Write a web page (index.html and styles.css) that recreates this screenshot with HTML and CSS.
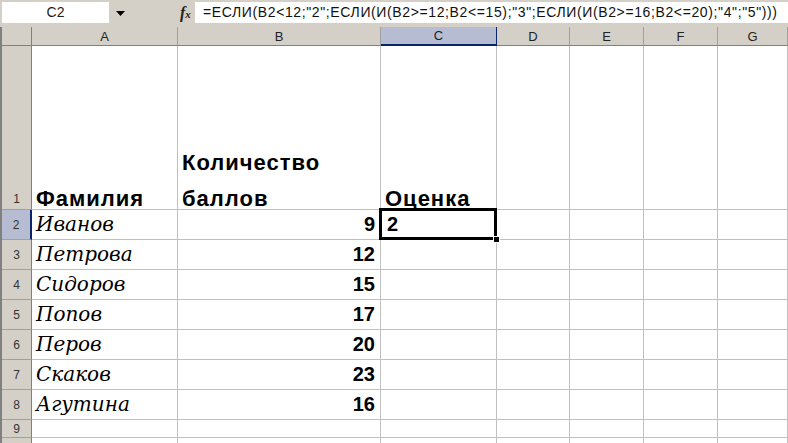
FILE: index.html
```html
<!DOCTYPE html>
<html lang="ru">
<head>
<meta charset="utf-8">
<link rel="stylesheet" href="styles.css">
</head>
<body>
<div class="app">
  <div class="fbar">
    <div class="namebox">C2</div>
    <div class="dd"><svg width="9" height="5" viewBox="0 0 9 5"><path d="M0 0H9L4.5 5Z" fill="#000"/></svg></div>
    <div class="fx">f<span>x</span></div>
    <div class="formula">=ЕСЛИ(B2&lt;12;"2";ЕСЛИ(И(B2&gt;=12;B2&lt;=15);"3";ЕСЛИ(И(B2&gt;=16;B2&lt;=20);"4";"5")))</div>
  </div>
  <div class="sheet">
    <div class="hd corner"></div>
    <div class="hd col">A</div>
    <div class="hd col">B</div>
    <div class="hd col sel">C</div>
    <div class="hd col">D</div>
    <div class="hd col">E</div>
    <div class="hd col">F</div>
    <div class="hd col">G</div>

    <div class="hd row r1">1</div>
    <div class="c title">Фамилия</div>
    <div class="c title wrap"><span>Количество</span><span class="l2">баллов</span></div>
    <div class="c title">Оценка</div>
    <div class="c"></div><div class="c"></div><div class="c"></div><div class="c"></div>

    <div class="hd row rsel">2</div>
    <div class="c name">Иванов</div>
    <div class="c num">9</div>
    <div class="c num left active">2</div>
    <div class="c"></div><div class="c"></div><div class="c"></div><div class="c"></div>

    <div class="hd row">3</div>
    <div class="c name">Петрова</div>
    <div class="c num">12</div>
    <div class="c"></div><div class="c"></div><div class="c"></div><div class="c"></div><div class="c"></div>

    <div class="hd row">4</div>
    <div class="c name">Сидоров</div>
    <div class="c num">15</div>
    <div class="c"></div><div class="c"></div><div class="c"></div><div class="c"></div><div class="c"></div>

    <div class="hd row">5</div>
    <div class="c name">Попов</div>
    <div class="c num">17</div>
    <div class="c"></div><div class="c"></div><div class="c"></div><div class="c"></div><div class="c"></div>

    <div class="hd row">6</div>
    <div class="c name">Перов</div>
    <div class="c num">20</div>
    <div class="c"></div><div class="c"></div><div class="c"></div><div class="c"></div><div class="c"></div>

    <div class="hd row">7</div>
    <div class="c name">Скаков</div>
    <div class="c num">23</div>
    <div class="c"></div><div class="c"></div><div class="c"></div><div class="c"></div><div class="c"></div>

    <div class="hd row">8</div>
    <div class="c name">Агутина</div>
    <div class="c num">16</div>
    <div class="c"></div><div class="c"></div><div class="c"></div><div class="c"></div><div class="c"></div>

    <div class="hd row">9</div>
    <div class="c"></div><div class="c"></div><div class="c"></div><div class="c"></div><div class="c"></div><div class="c"></div><div class="c"></div>

    <div class="hd row"></div>
    <div class="c"></div><div class="c"></div><div class="c"></div><div class="c"></div><div class="c"></div><div class="c"></div><div class="c"></div>
  </div>
</div>
</body>
</html>
```

FILE: styles.css
```css
html, body {
  margin: 0;
  padding: 0;
  background: #ffffff;
}
.app {
  width: 788px;
  height: 443px;
  overflow: hidden;
  font-family: "Liberation Sans", Arial, sans-serif;
  color: #000;
}
.fbar {
  height: 27px;
  box-sizing: border-box;
  background: #d4d0c8;
  display: flex;
  align-items: flex-start;
  padding-top: 2px;
}
.namebox {
  margin-left: 2px;
  width: 107px;
  height: 21px;
  background: #fff;
  font-size: 14px;
  line-height: 21px;
  text-align: center;
  color: #222;
}
.dd {
  width: 22px;
  height: 22px;
  display: flex;
  align-items: center;
  justify-content: center;
}
.fx {
  margin-left: 49px;
  width: 15px;
  height: 21px;
  font-family: "Liberation Serif", serif;
  font-style: italic;
  font-weight: bold;
  font-size: 16px;
  line-height: 21px;
  color: #222;
}
.fx span {
  font-size: 11px;
}
.formula {
  flex: 1;
  height: 21px;
  background: #fff;
  font-size: 14px;
  letter-spacing: 0.62px;
  line-height: 21px;
  padding-left: 8px;
  white-space: nowrap;
  overflow: hidden;
  color: #111;
}
.sheet {
  display: grid;
  grid-template-columns: 30px 146px 203px 116px 73px 74px 74px 70px;
  grid-template-rows: 19px 164px repeat(7, 30px) 18px 18px;
  border-left: 2px solid #808080;
}
.hd {
  background: #d4d0c8;
  box-sizing: border-box;
  font-size: 13px;
  color: #222;
  display: flex;
  align-items: center;
  justify-content: center;
}
.corner {
  border-right: 1px solid #808080;
  border-bottom: 1px solid #808080;
}
.col {
  border-right: 1px solid #a0a0a0;
  border-bottom: 1px solid #808080;
}
.col.sel {
  background: #b6bdd2;
  border-bottom: 2px solid #0a246a;
  border-right: 1px solid #0a246a;
}
.row {
  border-right: 1px solid #808080;
  border-bottom: 1px solid #a0a0a0;
  font-size: 12px;
  color: #333;
}
.row.r1 {
  align-items: flex-end;
  padding-bottom: 3px;
}
.row.rsel {
  background: #b6bdd2;
  border-right: 2px solid #0a246a;
}
.c {
  box-sizing: border-box;
  border-right: 1px solid #c0c0c0;
  border-bottom: 1px solid #c0c0c0;
  background: #fff;
  display: flex;
  align-items: flex-end;
  padding: 0 4px 0 4px;
  white-space: nowrap;
  position: relative;
}
.title {
  font-weight: bold;
  font-size: 22px;
  letter-spacing: 1px;
  line-height: 20px;
  padding-bottom: 0;
}
.wrap {
  flex-direction: column;
  justify-content: flex-end;
  align-items: flex-start;
}
.wrap .l2 {
  margin-top: 16px;
}
.name {
  font-family: "DejaVu Serif", "Liberation Serif", serif;
  font-style: italic;
  font-size: 20px;
  line-height: 26px;
  padding-bottom: 2px;
}
.num {
  justify-content: flex-end;
  font-weight: bold;
  font-size: 20px;
  line-height: 26px;
  padding-right: 5px;
  padding-bottom: 2px;
}
.num.left {
  justify-content: flex-start;
  padding-left: 6px;
}
.active::after {
  content: "";
  position: absolute;
  left: -2px;
  top: -2px;
  right: -1px;
  bottom: -1px;
  border: 3px solid #000;
  pointer-events: none;
}
.active::before {
  content: "";
  position: absolute;
  right: -4px;
  bottom: -4px;
  width: 5px;
  height: 5px;
  background: #000;
  border: 1px solid #fff;
  z-index: 2;
}
```
